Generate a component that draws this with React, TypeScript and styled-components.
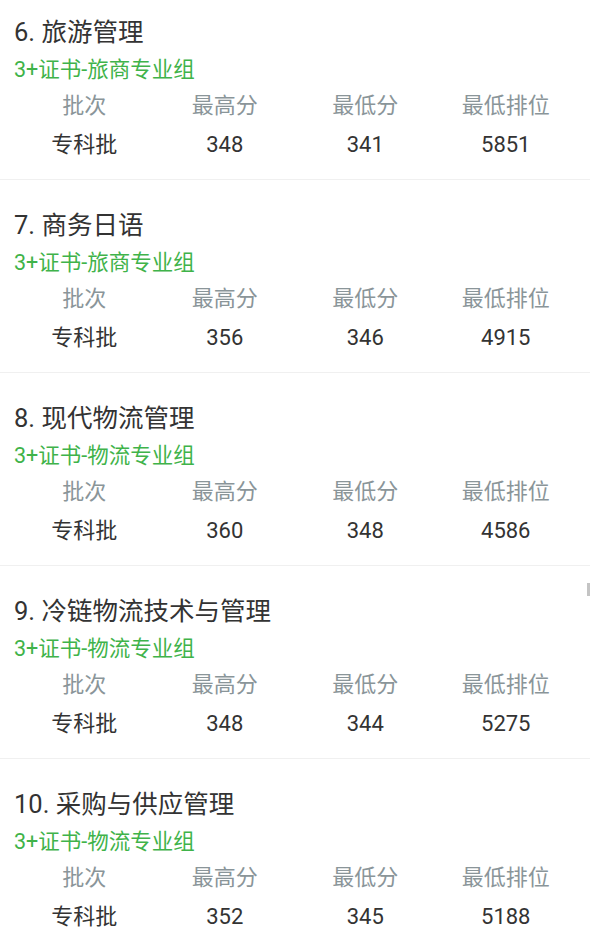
import React from "react";
import styled, { createGlobalStyle } from "styled-components";

type Major = {
  no: number;
  name: string;
  group: string;
  batch: string;
  high: number;
  low: number;
  rank: number;
};

const MAJORS: Array<Major> = [
  { no: 6, name: "旅游管理", group: "3+证书-旅商专业组", batch: "专科批", high: 348, low: 341, rank: 5851 },
  { no: 7, name: "商务日语", group: "3+证书-旅商专业组", batch: "专科批", high: 356, low: 346, rank: 4915 },
  { no: 8, name: "现代物流管理", group: "3+证书-物流专业组", batch: "专科批", high: 360, low: 348, rank: 4586 },
  { no: 9, name: "冷链物流技术与管理", group: "3+证书-物流专业组", batch: "专科批", high: 348, low: 344, rank: 5275 },
  { no: 10, name: "采购与供应管理", group: "3+证书-物流专业组", batch: "专科批", high: 352, low: 345, rank: 5188 },
];

const HEADERS = ["批次", "最高分", "最低分", "最低排位"];

const App = () => {
  return (
    <Page>
      <GlobalStyle />
      {MAJORS.map((cur) => (
        <Section key={cur.no}>
          <Title>
            {cur.no}. {cur.name}
          </Title>
          <Group>{cur.group}</Group>
          <Table>
            {HEADERS.map((h) => (
              <HeadCell key={h}>{h}</HeadCell>
            ))}
            <Cell>{cur.batch}</Cell>
            <Cell>{cur.high}</Cell>
            <Cell>{cur.low}</Cell>
            <Cell>{cur.rank}</Cell>
          </Table>
        </Section>
      ))}
      <ScrollThumb />
    </Page>
  );
};

const GlobalStyle = createGlobalStyle`
  html, body {
    margin: 0;
    padding: 0;
    background: #ffffff;
    overflow: hidden;
  }
  body {
    font-family: Roboto, "Noto Sans CJK SC", sans-serif;
  }
`;

const Page = styled.div`
  width: 590px;
  height: 939px;
  overflow: hidden;
  background: #fff;
`;

const Section = styled.div`
  padding: 27px 0 11px;
  border-bottom: 1px solid #f0f0f0;
  &:first-child {
    padding-top: 14px;
  }
`;

const Title = styled.div`
  padding: 0 14px;
  font-size: 25.5px;
  line-height: 36px;
  color: #333333;
  white-space: nowrap;
`;

const Group = styled.div`
  padding: 0 14px;
  font-size: 21.5px;
  line-height: 40px;
  color: #3fb34a;
  white-space: nowrap;
`;

const Table = styled.div`
  display: grid;
  grid-template-columns: repeat(4, 1fr);
  padding: 0 14px;
  text-align: center;
`;

const HeadCell = styled.div`
  font-size: 22px;
  line-height: 32px;
  color: #8a9599;
`;

const Cell = styled.div`
  font-size: 22px;
  line-height: 46px;
  color: #333333;
`;

const ScrollThumb = styled.div`
  position: fixed;
  right: 0;
  top: 583px;
  width: 3px;
  height: 13px;
  background: #c4c4c4;
`;

export default App;
